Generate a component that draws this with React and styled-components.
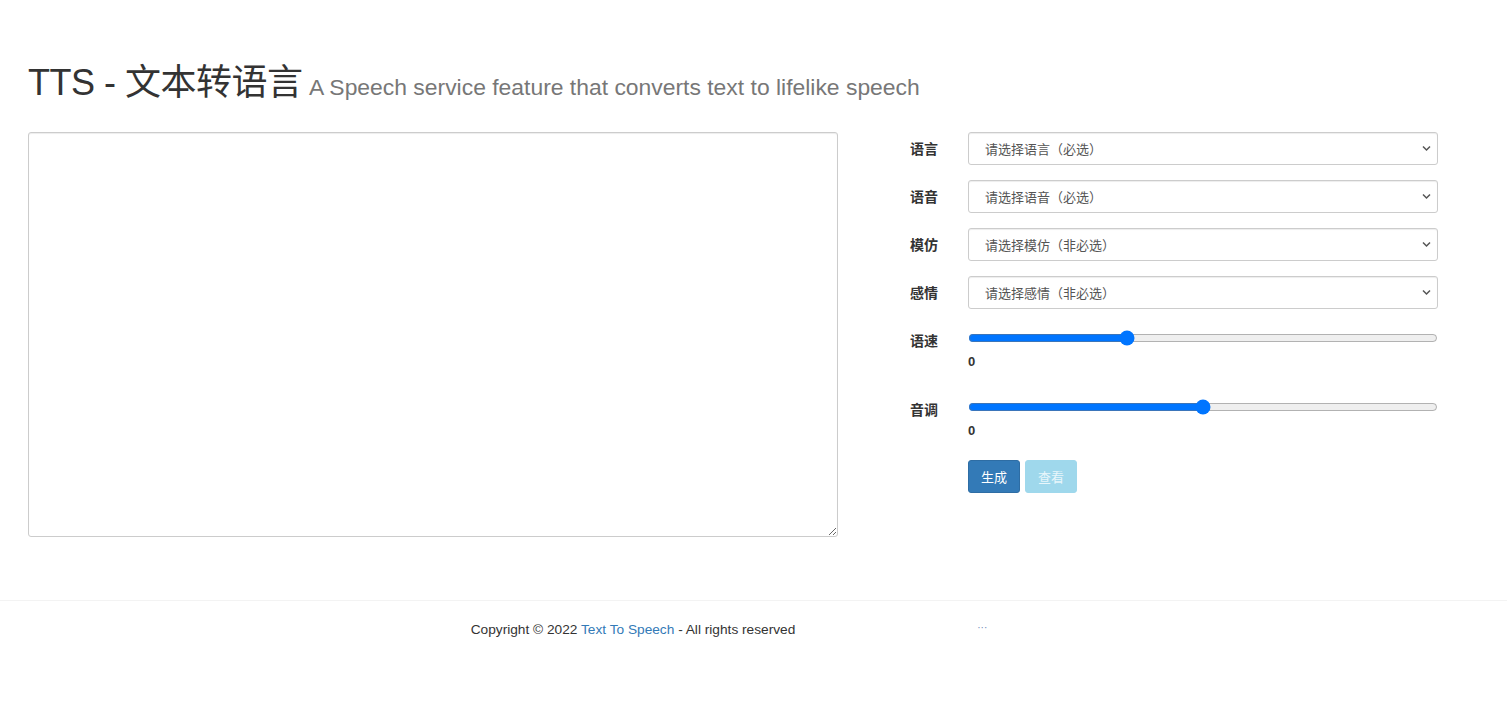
import React, { useState } from "react";
import styled, { createGlobalStyle } from "styled-components";

const GlobalStyle = createGlobalStyle`
  html, body {
    margin: 0;
    padding: 0;
    background: #fff;
  }
  body {
    font-family: "Liberation Sans", Arial, "Noto Sans CJK SC", sans-serif;
    font-size: 14px;
    color: #333;
  }
  * {
    box-sizing: border-box;
  }
`;

const Page = styled.div`
  width: 1507px;
  height: 708px;
  overflow: hidden;
`;

const Container = styled.div`
  width: 1440px;
  margin-left: 13px;
`;

const Title = styled.h1`
  margin: 63px 15px 0;
  height: 40px;
  font-size: 36px;
  font-weight: 400;
  line-height: 40px;
  color: #333;
  white-space: nowrap;
  letter-spacing: -0.5px;
`;

const Sub = styled.small`
  margin-left: -3px;
  font-size: 22.9px;
  letter-spacing: 0;
  color: #777;
  font-weight: 400;
`;

const Row = styled.div`
  display: flex;
  margin-top: 29px;
`;

const LeftCol = styled.div`
  width: 840px;
  padding: 0 15px;
`;

const TextArea = styled.textarea`
  display: block;
  width: 100%;
  height: 405px;
  border: 1px solid #ccc;
  border-radius: 3px;
  box-shadow: inset 0 1px 1px rgba(0, 0, 0, 0.075);
  padding: 6px 12px;
  font-family: inherit;
  font-size: 14px;
  color: #555;
  resize: vertical;
  outline: none;
`;

const RightCol = styled.div`
  width: 600px;
`;

const Group = styled.div`
  display: grid;
  grid-template-columns: 100px 1fr;
  align-items: ${(p) => (p.$top ? "start" : "center")};
  margin-bottom: ${(p) => p.$gap ?? 15}px;
  padding-top: ${(p) => (p.$top ? 6 : 0)}px;
`;

const Label = styled.label`
  padding: 0 15px 2px;
  text-align: right;
  font-weight: 700;
  font-size: 14px;
  line-height: 20px;
  color: #333;
  font-family: "Noto Sans CJK SC", sans-serif;
`;

const Control = styled.div`
  padding: 0 15px;
`;

const SelectBox = styled.div`
  position: relative;
`;

const Select = styled.select`
  display: block;
  width: 100%;
  height: 33px;
  padding: 0 30px 0 16px;
  border: 1px solid #ccc;
  border-radius: 3px;
  background: #fff;
  box-shadow: inset 0 1px 1px rgba(0, 0, 0, 0.075);
  font-family: "Noto Sans CJK SC", sans-serif;
  font-size: 13px;
  color: #555;
  appearance: none;
  outline: none;
`;

const Chevron = styled.svg`
  position: absolute;
  right: 7px;
  top: 13px;
  width: 9px;
  height: 7px;
  pointer-events: none;
`;

const Range = styled.input`
  display: block;
  width: 100%;
  height: 16px;
  margin: 0;
  accent-color: #0075ff;
`;

const Value = styled.div`
  margin-top: 6px;
  font-weight: 700;
  font-size: 13px;
  line-height: 20px;
  color: #333;
`;

const Buttons = styled.div`
  display: flex;
  gap: 5px;
`;

const Button = styled.button`
  height: 33px;
  padding: 0 12px;
  border: 1px solid ${(p) => (p.$light ? "#9fd8ec" : "#2e6da4")};
  border-radius: 3px;
  background: ${(p) => (p.$light ? "#9fd8ec" : "#337ab7")};
  color: ${(p) => (p.$light ? "#e8f6fb" : "#fff")};
  font-family: "Noto Sans CJK SC", sans-serif;
  font-size: 13px;
  cursor: ${(p) => (p.$light ? "not-allowed" : "pointer")};
`;

const Footer = styled.footer`
  margin-top: 63px;
  border-top: 1px solid #f3f3f3;
  padding-top: 20px;
`;

const FooterText = styled.div`
  width: 1440px;
  margin-left: 13px;
  display: flex;
  justify-content: center;
  font-size: 13.7px;
  line-height: 18px;
  color: #333;
`;

const Link = styled.a`
  color: #337ab7;
  text-decoration: none;
`;

const Trail = styled.span`
  width: 200px;
  text-align: right;
  padding-right: 8px;
  color: #6f88b8;
  font-size: 10px;
  line-height: 14px;
`;

const selects = [
  { label: "语言", placeholder: "请选择语言（必选）" },
  { label: "语音", placeholder: "请选择语音（必选）" },
  { label: "模仿", placeholder: "请选择模仿（非必选）" },
  { label: "感情", placeholder: "请选择感情（非必选）" },
];

function SelectField({ label, placeholder }) {
  return (
    <Group>
      <Label>{label}</Label>
      <Control>
        <SelectBox>
          <Select defaultValue="">
            <option value="">{placeholder}</option>
          </Select>
          <Chevron viewBox="0 0 9 7">
            <path d="M1 1.5 L4.5 5 L8 1.5" fill="none" stroke="#555" strokeWidth="1.5" />
          </Chevron>
        </SelectBox>
      </Control>
    </Group>
  );
}

export default function App() {
  const [rate, setRate] = useState(0);
  const [pitch, setPitch] = useState(0);

  return (
    <Page>
      <GlobalStyle />
      <Container>
        <Title>
          TTS - 文本转语言 <Sub>A Speech service feature that converts text to lifelike speech</Sub>
        </Title>
        <Row>
          <LeftCol>
            <TextArea />
          </LeftCol>
          <RightCol>
            {selects.map((s) => (
              <SelectField key={s.label} {...s} />
            ))}
            <Group $top $gap={21}>
              <Label>语速</Label>
              <Control>
                <Range
                  type="range"
                  min={-100}
                  max={200}
                  value={rate}
                  onChange={(e) => setRate(Number(e.target.value))}
                />
                <Value>{rate}</Value>
              </Control>
            </Group>
            <Group $top $gap={19}>
              <Label>音调</Label>
              <Control>
                <Range
                  type="range"
                  min={-50}
                  max={50}
                  value={pitch}
                  onChange={(e) => setPitch(Number(e.target.value))}
                />
                <Value>{pitch}</Value>
              </Control>
            </Group>
            <Group>
              <span />
              <Control>
                <Buttons>
                  <Button>生成</Button>
                  <Button $light disabled>查看</Button>
                </Buttons>
              </Control>
            </Group>
          </RightCol>
        </Row>
      </Container>
      <Footer>
        <FooterText>
          <span>
            Copyright © 2022 <Link href="#">Text To Speech</Link> - All rights reserved
          </span>
          <Trail>···</Trail>
        </FooterText>
      </Footer>
    </Page>
  );
}
